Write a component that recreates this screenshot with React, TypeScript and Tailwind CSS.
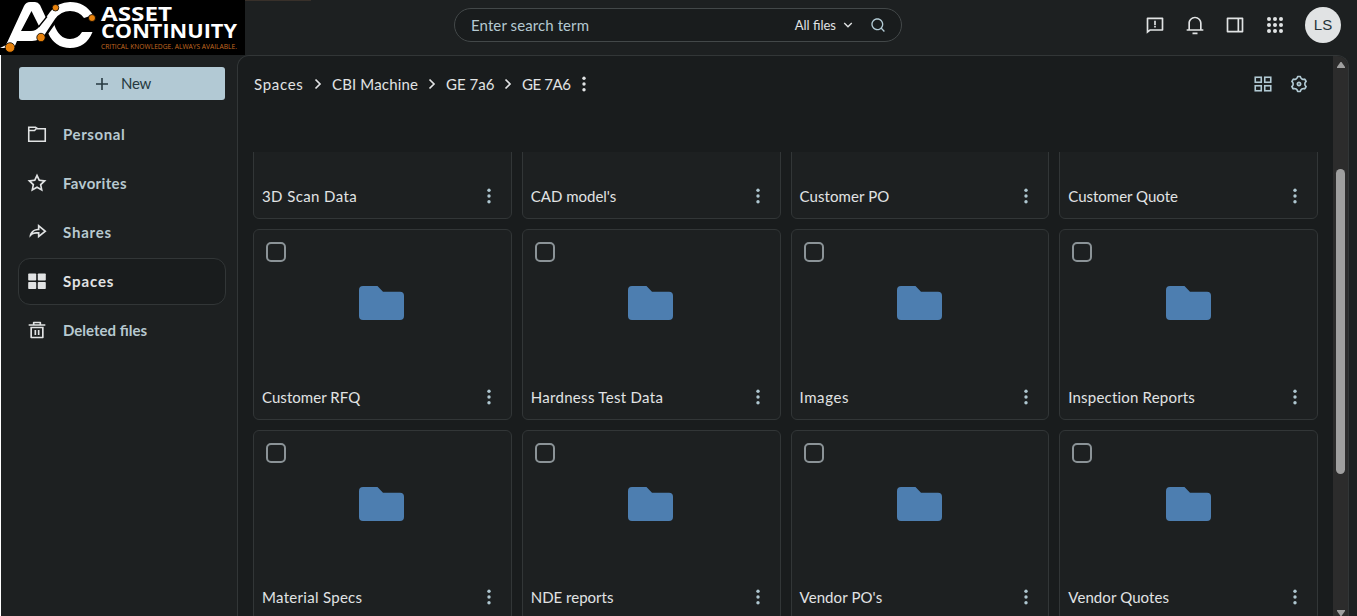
import {
  RiArrowDownSLine,
  RiDeleteBin5Line,
  RiFeedbackLine,
  RiLayoutRightLine,
  RiNotification3Line,
  RiSearchLine,
  RiSettings3Line,
  RiShareForwardLine,
  RiStarLine,
} from "react-icons/ri";

function Logo() {
  return (
    <svg viewBox="0 0 245 55" className="h-[55px] w-[245px] shrink-0 bg-black">
      <path
        d="M0 48 L6 45 L24 6 Q26 2 30 2 H35 Q38 2 40 5 L46 18 L39 26 L31.500 11 L21 31 H31 Q36 31 39 27 L50 12 Q58 2 70 2 Q85 2 93 15 L84 18 Q79 11 70 11 Q61 11 55 19 L45 34 Q40 41 32 41 H17 L14 48 Z"
        fill="#fff"
      />
      <path
        d="M54 24 Q59 39 70 39 Q78 39 82 32 H92.500 Q86 48 70 48 Q55 48 48 33 Z"
        fill="#fff"
      />
      <path d="M38.500 27 L47 16.500 M47.500 33.500 L55 23" stroke="#000" strokeWidth="1.300" />
      <g fill="#e8820c" stroke="#000" strokeWidth=".8">
        <circle cx="10" cy="47.500" r="4.800" />
        <circle cx="41" cy="37.500" r="4.200" />
        <circle cx="55.500" cy="7.700" r="3.300" />
        <circle cx="92" cy="18" r="3.500" />
      </g>
      <g fontFamily="Open Sans, sans-serif">
        <text x="101" y="21" fill="#fff" fontSize="19" fontWeight="700" textLength="71" lengthAdjust="spacingAndGlyphs">
          ASSET
        </text>
        <text x="101" y="38" fill="#fff" fontSize="19" fontWeight="700" textLength="136" lengthAdjust="spacingAndGlyphs">
          CONTINUITY
        </text>
        <text x="101" y="49" fill="#c56a21" fontSize="7" textLength="136" lengthAdjust="spacingAndGlyphs">
          CRITICAL KNOWLEDGE. ALWAYS AVAILABLE.
        </text>
      </g>
    </svg>
  );
}

function PersonalIcon() {
  return (
    <svg viewBox="0 0 20 20" className="size-5" fill="none" stroke="currentColor" strokeWidth="1.6">
      <path d="M1.750 3.250 H8.500 L10.500 4.750 H18.250 V17.250 H1.750 Z" />
      <path d="M2 6.500 H7.500 L9.500 4.500" />
    </svg>
  );
}

function SpacesIcon() {
  return (
    <svg viewBox="0 0 20 20" className="size-5" fill="currentColor">
      <rect x="1.200" y="2.500" width="8" height="7" rx=".8" />
      <rect x="10.800" y="2.500" width="8" height="7" rx=".8" />
      <rect x="1.200" y="11" width="8" height="7" rx=".8" />
      <rect x="10.800" y="11" width="8" height="7" rx=".8" />
    </svg>
  );
}

function AppsIcon() {
  const steps = [4, 10, 16];
  return (
    <svg viewBox="0 0 20 20" className="size-5" fill="currentColor">
      {steps.map((y) => steps.map((x) => <circle key={`${x}-${y}`} cx={x} cy={y} r="2" />))}
    </svg>
  );
}

function TilesIcon() {
  return (
    <svg viewBox="0 0 20 20" className="size-5" fill="none" stroke="currentColor" strokeWidth="1.6">
      <rect x="2.250" y="3.250" width="6" height="5" />
      <rect x="11.750" y="3.250" width="6" height="5" />
      <rect x="2.250" y="11.750" width="6" height="5" />
      <rect x="11.750" y="11.750" width="6" height="5" />
    </svg>
  );
}

function MoreIcon() {
  return (
    <svg viewBox="0 0 4 16" className="h-4 w-1 shrink-0" fill="currentColor">
      <circle cx="2" cy="2.200" r="1.700" />
      <circle cx="2" cy="8" r="1.700" />
      <circle cx="2" cy="13.800" r="1.700" />
    </svg>
  );
}

function ChevronIcon() {
  return (
    <svg viewBox="0 0 8 12" className="h-3 w-2 shrink-0" fill="none" stroke="currentColor" strokeWidth="1.700">
      <path d="M1.500 1.500 L6 6 L1.500 10.500" />
    </svg>
  );
}

function FolderIcon() {
  return (
    <svg viewBox="0 0 45 34" className="h-[34px] w-[45px]" fill="#4d7eb0">
      <path d="M4 0 H18.500 L24 5.800 H41 Q45 5.800 45 9.800 V30 Q45 34 41 34 H4 Q0 34 0 30 V4 Q0 0 4 0 Z" />
    </svg>
  );
}

const navItems = [
  { label: "Personal", icon: <PersonalIcon />, spacing: "tracking-[0.6px]" },
  { label: "Favorites", icon: <RiStarLine size={20} />, spacing: "tracking-[0.35px]" },
  { label: "Shares", icon: <RiShareForwardLine size={20} />, spacing: "tracking-[0.8px]" },
  { label: "Spaces", icon: <SpacesIcon />, spacing: "tracking-[0.9px]", active: true },
  { label: "Deleted files", icon: <RiDeleteBin5Line size={20} />, spacing: "tracking-[0px]" },
];

const folders = [
  { name: "3D Scan Data", spacing: "tracking-[0.4px]" },
  { name: "CAD model's", spacing: "tracking-[0px]" },
  { name: "Customer PO", spacing: "tracking-[0.1px]" },
  { name: "Customer Quote", spacing: "tracking-[0px]" },
  { name: "Customer RFQ", spacing: "tracking-[0.05px]" },
  { name: "Hardness Test Data", spacing: "tracking-[0.3px]" },
  { name: "Images", spacing: "tracking-[0.6px]" },
  { name: "Inspection Reports", spacing: "tracking-[0.2px]" },
  { name: "Material Specs", spacing: "tracking-[0.3px]" },
  { name: "NDE reports", spacing: "tracking-[0px]" },
  { name: "Vendor PO's", spacing: "tracking-[0.1px]" },
  { name: "Vendor Quotes", spacing: "tracking-[0.1px]" },
];

function FolderCard({ name, spacing }: { name: string; spacing: string }) {
  return (
    <div className="flex h-[190.6px] flex-col rounded-md border border-[#323637] bg-[#1d2021]">
      <div className="pl-3 pt-3">
        <div className="size-5 rounded-[5px] border-2 border-[#8b9397]" />
      </div>
      <div className="mt-6 flex justify-center pr-px">
        <FolderIcon />
      </div>
      <div className="mt-auto flex h-[45px] items-center justify-between pl-2 pr-5 text-[#aec6d0]">
        <span className={`whitespace-nowrap text-[15px] text-[#e1e3e4] ${spacing}`}>{name}</span>
        <MoreIcon />
      </div>
    </div>
  );
}

export default function App() {
  return (
    <div className="flex h-[616px] w-[1357px] flex-col overflow-hidden bg-[#1d2021] font-['Lato',sans-serif] text-[15px] leading-5 text-[#e1e3e4]">
      <header className="flex h-[55px] shrink-0">
        <Logo />
        <div className="h-px w-[66px] bg-[#38302a]" />
        <div className="ml-[143px] mt-2 flex h-[34px] w-[448px] items-center rounded-full border border-[#434849] bg-[#191c1d] pl-4 pr-[15px]">
          <span className="text-[15px] tracking-[0.1px] text-[#b5c9d1]">Enter search term</span>
          <span className="ml-auto text-[13px]">All files</span>
          <RiArrowDownSLine size={16} className="ml-1" />
          <RiSearchLine size={16} className="ml-[14px] text-[#b2cad4]" />
        </div>
        <div className="ml-auto mr-4 mt-[7px] flex h-9 items-center gap-5">
          <RiFeedbackLine size={20} />
          <RiNotification3Line size={20} />
          <RiLayoutRightLine size={20} />
          <AppsIcon />
          <div className="flex size-9 items-center justify-center rounded-full bg-[#e1e3e4] font-['Liberation_Sans',sans-serif] text-[15px] text-[#26343a]">
            LS
          </div>
        </div>
      </header>

      <div className="flex min-h-0 flex-1">
        <aside className="w-[237px] shrink-0 border-l border-white pl-[17px] pr-[11px] pt-3">
          <button className="ml-px flex h-[33px] w-[206px] items-center justify-center rounded-[3px] bg-[#b2c9d4] pl-0.5 text-[#263940]">
            <svg viewBox="0 0 14 14" className="mr-3 size-[14px]" stroke="currentColor" strokeWidth="1.600">
              <path d="M7 1 V13 M1 7 H13" />
            </svg>
            <span className="pb-px tracking-[-0.3px]">New</span>
          </button>
          <nav className="mt-[11px] flex flex-col gap-0.5">
            {navItems.map((item) => (
              <a
                key={item.label}
                className={`flex h-[47px] items-center gap-4 rounded-xl border pb-0.5 pl-2 font-bold ${item.spacing} ${
                  item.active ? "border-[#323637] bg-[#191c1d]" : "border-transparent"
                }`}
              >
                {item.icon}
                <span className={item.active ? "" : "text-[#b7c9d0]"}>{item.label}</span>
              </a>
            ))}
          </nav>
        </aside>

        <main className="flex w-[1112px] overflow-hidden rounded-t-xl border border-b-0 border-[#323637] bg-[#191c1d]">
          <div className="flex w-[1095px] flex-col pl-[15px] pr-[15px]">
            <div className="flex h-14 shrink-0 items-center">
              <div className="flex items-center whitespace-nowrap">
                <span className="w-[61px] pl-px tracking-[0.7px]">Spaces</span>
                <ChevronIcon />
                <span className="ml-[10px] w-[96px] tracking-[0.15px]">CBI Machine</span>
                <ChevronIcon />
                <span className="ml-[10px] w-[58px] tracking-[0.05px]">GE 7a6</span>
                <ChevronIcon />
                <span className="ml-[10px] w-[60px] tracking-[-0.4px]">GE 7A6</span>
                <MoreIcon />
              </div>
              <div className="ml-auto mr-[9px] flex gap-4 text-[#b2cad4]">
                <TilesIcon />
                <RiSettings3Line size={20} />
              </div>
            </div>
            <div className="mt-10 min-h-0 flex-1 overflow-hidden">
              <div className="-mt-[123.2px] grid grid-cols-4 gap-[10px]">
                {folders.map((folder) => (
                  <FolderCard key={folder.name} {...folder} />
                ))}
              </div>
            </div>
          </div>
          <div className="flex w-[15px] flex-col items-center bg-[#2c2c2c]">
            <svg viewBox="0 0 8 6" className="mt-[6px] h-[6px] w-2 shrink-0" fill="#9f9f9f">
              <path d="M0 6 V5 L3.500 0 H4.500 L8 5 V6 Z" />
            </svg>
            <div className="mt-[101px] h-[305px] w-[9px] shrink-0 rounded-full bg-[#9f9f9f]" />
            <svg viewBox="0 0 8 6" className="mt-auto h-[6px] w-2 shrink-0" fill="#9f9f9f">
              <path d="M0 0 H8 V1 L4.500 6 H3.500 L0 1 Z" />
            </svg>
          </div>
        </main>
      </div>
    </div>
  );
}
